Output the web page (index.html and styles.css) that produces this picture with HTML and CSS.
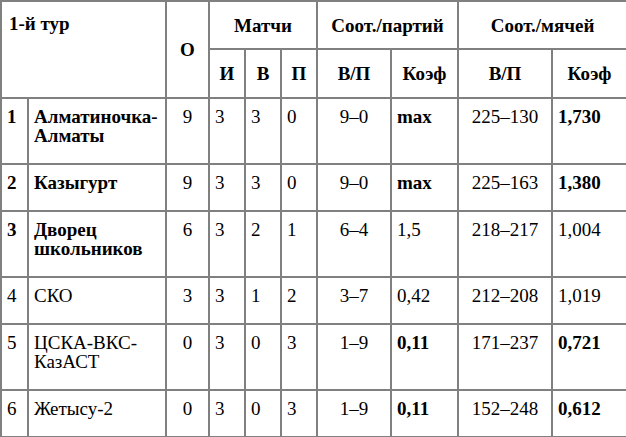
FILE: index.html
```html
<!DOCTYPE html>
<html lang="ru">
<head>
<meta charset="utf-8">
<title>1-й тур</title>
<link rel="stylesheet" href="styles.css">
</head>
<body>
<table class="standings">
  <colgroup>
    <col class="c-rank">
    <col class="c-team">
    <col class="c-pts">
    <col class="c-m">
    <col class="c-m">
    <col class="c-m">
    <col class="c-sets">
    <col class="c-setk">
    <col class="c-balls">
    <col class="c-ballk">
  </colgroup>
  <thead>
    <tr class="hrow1">
      <th class="tour" rowspan="2" colspan="2">1-й тур</th>
      <th rowspan="2">О</th>
      <th colspan="3">Матчи</th>
      <th colspan="2">Соот./партий</th>
      <th colspan="2">Соот./мячей</th>
    </tr>
    <tr class="hrow2">
      <th>И</th>
      <th>В</th>
      <th>П</th>
      <th>В/П</th>
      <th>Коэф</th>
      <th>В/П</th>
      <th>Коэф</th>
    </tr>
  </thead>
  <tbody>
    <tr>
      <td class="b">1</td>
      <td class="b">Алматиночка-Алматы</td>
      <td class="ctr">9</td>
      <td>3</td><td>3</td><td>0</td>
      <td class="ctr">9–0</td>
      <td class="b">max</td>
      <td class="ctr">225–130</td>
      <td class="b">1,730</td>
    </tr>
    <tr>
      <td class="b">2</td>
      <td class="b">Казыгурт</td>
      <td class="ctr">9</td>
      <td>3</td><td>3</td><td>0</td>
      <td class="ctr">9–0</td>
      <td class="b">max</td>
      <td class="ctr">225–163</td>
      <td class="b">1,380</td>
    </tr>
    <tr>
      <td class="b">3</td>
      <td class="b">Дворец школьников</td>
      <td class="ctr">6</td>
      <td>3</td><td>2</td><td>1</td>
      <td class="ctr">6–4</td>
      <td>1,5</td>
      <td class="ctr">218–217</td>
      <td>1,004</td>
    </tr>
    <tr>
      <td>4</td>
      <td>СКО</td>
      <td class="ctr">3</td>
      <td>3</td><td>1</td><td>2</td>
      <td class="ctr">3–7</td>
      <td>0,42</td>
      <td class="ctr">212–208</td>
      <td>1,019</td>
    </tr>
    <tr>
      <td>5</td>
      <td>ЦСКА-ВКС-КазАСТ</td>
      <td class="ctr">0</td>
      <td>3</td><td>0</td><td>3</td>
      <td class="ctr">1–9</td>
      <td class="b">0,11</td>
      <td class="ctr">171–237</td>
      <td class="b">0,721</td>
    </tr>
    <tr>
      <td>6</td>
      <td>Жетысу-2</td>
      <td class="ctr">0</td>
      <td>3</td><td>0</td><td>3</td>
      <td class="ctr">1–9</td>
      <td class="b">0,11</td>
      <td class="ctr">152–248</td>
      <td class="b">0,612</td>
    </tr>
  </tbody>
</table>
</body>
</html>
```
FILE: styles.css
```css
html, body {
  margin: 0;
  padding: 0;
  background: #ffffff;
}

body {
  font-family: "Liberation Serif", "Times New Roman", serif;
  font-size: 19px;
  color: #000000;
}

.standings {
  border-collapse: collapse;
  table-layout: fixed;
  width: 626px;
}

.c-rank { width: 27px; }
.c-team { width: 138px; }
.c-pts { width: 43px; }
.c-m { width: 36px; }
.c-sets { width: 74px; }
.c-setk { width: 67px; }
.c-balls { width: 94px; }
.c-ballk { width: 75px; }

.standings th,
.standings td {
  border: 2px solid #808080;
  line-height: 19px;
}

.standings th {
  font-weight: bold;
  text-align: center;
  vertical-align: middle;
  padding: 0 4px;
}

.hrow1 { height: 48px; }
.hrow2 { height: 49px; }

.standings th.tour {
  text-align: left;
  vertical-align: top;
  padding: 12px 8px 0 7px;
}

.standings td {
  vertical-align: top;
  text-align: left;
  padding: 8px 4px 18px 5px;
}

.standings td.ctr {
  text-align: center;
  padding-left: 4px;
}

.standings td.b {
  font-weight: bold;
}
```
